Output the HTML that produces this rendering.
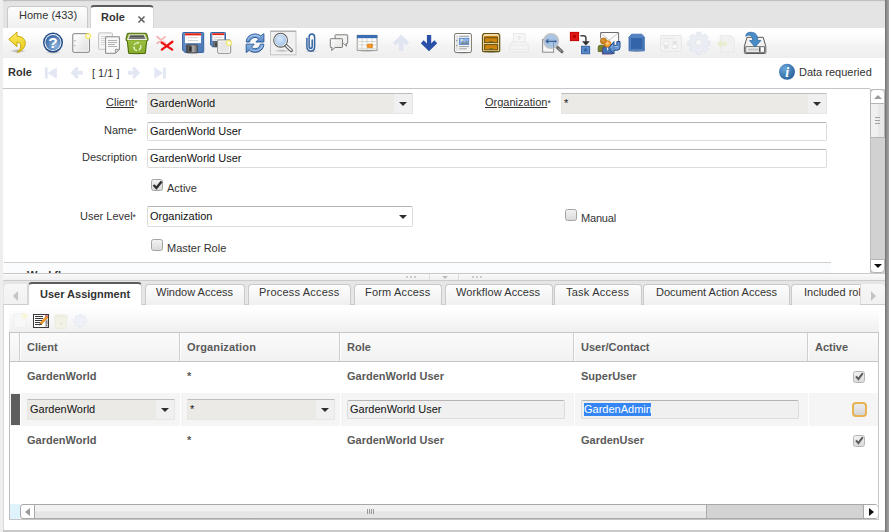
<!DOCTYPE html>
<html>
<head>
<meta charset="utf-8">
<title>Role</title>
<style>
html,body{margin:0;padding:0;}
body{width:889px;height:532px;overflow:hidden;background:#fff;position:relative;
  font-family:"Liberation Sans",sans-serif;font-size:11px;color:#333;}
.a{position:absolute;}
.t{position:absolute;white-space:nowrap;line-height:13px;}
.b{font-weight:bold;}
/* top tab bar */
#tabbar{left:0;top:0;width:889px;height:28px;background:#e4e4e4;}
#topline{left:0;top:0;width:889px;height:2px;background:linear-gradient(#c0c0c0 50%,#dfdfdf 50%);}
#leftedge{left:0;top:0;width:3px;height:532px;background:#eeeeee;}
#leftedge2{left:3px;top:281px;width:1px;height:250px;background:#dadada;}
#rightedge{left:885px;top:0;width:4px;height:532px;background:linear-gradient(90deg,#6e6e6e,#8c8c8c 40%,#a2a2a2);}
#bottomedge{left:3px;top:530px;width:882px;height:2px;background:#c9c9c9;}
.tab{position:absolute;box-sizing:border-box;border:1px solid #c9c9c9;border-bottom:none;border-radius:4px 4px 0 0;
  background:linear-gradient(#fdfdfd,#f0f0f0);}
.tabsel{background:#fff;border-top:2px solid #5c5c5c;border-color:#5c5c5c #d6d6d6 #d6d6d6;}
/* toolbar */
#toolbar{left:3px;top:28px;width:882px;height:30px;background:linear-gradient(#ffffff,#fdfdfd 25%,#f3f3f3 62%,#eeeeee);}
/* fields */
.inp{position:absolute;box-sizing:border-box;border:1px solid #dcdcdc;border-top-color:#b4b4b4;background:#fff;border-radius:2px;}
.ro{background:#eceae6;border-color:#e6e6e3;border-top-color:#bebebe;border-radius:1px;}
.btnz{position:absolute;background:#f0f0f0;}
.arr{position:absolute;width:0;height:0;border-left:4px solid transparent;border-right:4px solid transparent;border-top:4px solid #2e2e2e;}
.cb{position:absolute;box-sizing:border-box;width:12px;height:12px;border:1px solid #a3a3a3;border-radius:2.5px;background:linear-gradient(#f2f2f2,#dadada);}
.hl{position:absolute;height:1px;background:#cfcfcf;}
.vl{position:absolute;width:1px;background:#cfcfcf;}
.gt{position:absolute;white-space:nowrap;line-height:13px;font-weight:bold;color:#5a5a5a;}
</style>
</head>
<body>
<!-- frame -->
<div class="a" id="tabbar"></div>
<div class="a" id="topline"></div>
<div class="a" id="toolbar"></div>
<div class="a" id="leftedge"></div>
<div class="a" id="leftedge2"></div>
<div class="a" id="rightedge"></div>
<div class="a" id="bottomedge"></div>

<!-- top tabs -->
<div class="tab" style="left:7px;top:6px;width:81px;height:22px;"></div>
<div class="t" style="left:19px;top:9px;">Home (433)</div>
<div class="tab tabsel" style="left:90px;top:5px;width:64px;height:23px;"></div>
<div class="t b" style="left:101px;top:11px;">Role</div>
<svg class="a" style="left:137px;top:15px;" width="9" height="9" viewBox="0 0 9 9"><path d="M1.5 1.5 L7.5 7.5 M7.5 1.5 L1.5 7.5" stroke="#5e5e5e" stroke-width="1.5" fill="none"/></svg>

<!-- TOOLBAR ICONS -->


<!-- breadcrumb -->
<div class="t b" style="left:8px;top:66px;">Role</div>
<div class="t" style="left:92px;top:67px;">[ 1/1 ]</div>
<div class="t" style="left:799px;top:66px;">Data requeried</div>
<div class="hl" style="left:3px;top:88px;width:867px;background:#c6c6c6;"></div>

<!-- FORM -->
<div id="form">
<!-- labels -->
<div class="t" style="left:106px;top:96px;"><span style="text-decoration:underline;">Client</span><span style="font-size:8.5px;vertical-align:0px;">*</span></div>
<div class="t" style="left:485px;top:96px;"><span style="text-decoration:underline;">Organization</span><span style="font-size:8.5px;vertical-align:0px;">*</span></div>
<div class="t" style="left:104px;top:124px;">Name<span style="font-size:8.5px;vertical-align:0px;">*</span></div>
<div class="t" style="left:82px;top:151px;">Description</div>
<div class="t" style="left:80px;top:210px;">User Level<span style="font-size:8.5px;vertical-align:0px;">*</span></div>

<!-- client combo -->
<div class="inp ro" style="left:147px;top:93px;width:266px;height:21px;"></div>
<div class="t" style="left:150px;top:97px;color:#111;">GardenWorld</div>
<div class="btnz" style="left:394px;top:94px;width:18px;height:19px;"></div><div class="arr" style="left:399px;top:102px;"></div>
<!-- org combo -->
<div class="inp ro" style="left:561px;top:93px;width:266px;height:21px;"></div>
<div class="t" style="left:564px;top:97px;color:#111;">*</div>
<div class="btnz" style="left:808px;top:94px;width:18px;height:19px;"></div><div class="arr" style="left:813px;top:102px;"></div>
<!-- name -->
<div class="inp" style="left:147px;top:122px;width:680px;height:19px;"></div>
<div class="t" style="left:150px;top:125px;color:#111;">GardenWorld User</div>
<!-- description -->
<div class="inp" style="left:147px;top:149px;width:680px;height:19px;"></div>
<div class="t" style="left:150px;top:152px;color:#111;">GardenWorld User</div>
<!-- active -->
<div class="cb" style="left:151px;top:179px;"></div>
<svg class="a" style="left:151px;top:178px;" width="14" height="14" viewBox="0 0 14 14"><path d="M2.6 7 L5.4 10 L10.6 3.4" stroke="#2e2e2e" stroke-width="2.4" fill="none"/></svg>
<div class="t" style="left:167px;top:182px;">Active</div>
<!-- user level -->
<div class="inp" style="left:147px;top:206px;width:266px;height:21px;"></div>
<div class="t" style="left:150px;top:210px;color:#111;">Organization</div>
<div class="arr" style="left:399px;top:215px;"></div>
<!-- manual -->
<div class="cb" style="left:565px;top:209px;"></div>
<div class="t" style="left:581px;top:212px;letter-spacing:-0.18px;">Manual</div>
<!-- master role -->
<div class="cb" style="left:151px;top:239px;"></div>
<div class="t" style="left:167px;top:242px;">Master Role</div>
<!-- group line + clipped Workflow -->
<div class="hl" style="left:4px;top:262px;width:827px;"></div>
<div class="a" style="left:4px;top:263px;width:827px;height:10px;overflow:hidden;background:#fbfcfe;"><div class="t b" style="left:23px;top:6px;">Workflow</div></div>
<!-- vertical scrollbar -->
<div class="a" style="left:870px;top:89px;width:15px;height:184px;background:#d1d1d1;border-left:1px solid #bdbdbd;box-sizing:border-box;"></div>
<div class="a" style="left:870px;top:103px;width:15px;height:35px;box-sizing:border-box;border:1px solid #b4b4b4;background:linear-gradient(90deg,#f1f1f1,#f0f0f0 50%,#e7e7e7 50%,#e8e8e8);"></div>
<div class="a" style="left:875px;top:117px;width:5px;height:1px;background:#a2a2a2;box-shadow:0 3px 0 #a2a2a2,0 6px 0 #a2a2a2;"></div>
<div class="a" style="left:870px;top:89px;width:15px;height:15px;box-sizing:border-box;border:1px solid #b4b4b4;border-radius:4px 4px 0 0;background:#fff;"></div>
<div class="a" style="left:873.5px;top:95px;width:0;height:0;border-left:4px solid transparent;border-right:4px solid transparent;border-bottom:4px solid #9a9a9a;"></div>
<div class="a" style="left:870px;top:259px;width:15px;height:14px;box-sizing:border-box;border:1px solid #b4b4b4;border-radius:0 0 4px 4px;background:#fff;"></div>
<div class="a" style="left:873.5px;top:264px;width:0;height:0;border-left:4px solid transparent;border-right:4px solid transparent;border-top:4px solid #111;"></div>
<!-- splitter -->
<div class="hl" style="left:3px;top:273px;width:882px;background:#c9c9c9;"></div>
<div class="a" style="left:3px;top:274px;width:882px;height:6px;background:linear-gradient(#fafafa,#f0f0f0);"></div>
<div class="hl" style="left:3px;top:280px;width:882px;background:#cccccc;"></div>
<div class="a" style="left:406px;top:276px;width:2px;height:2px;background:#cbcbcb;box-shadow:4px 0 0 #cbcbcb,8px 0 0 #cbcbcb;"></div>
<div class="a" style="left:472px;top:276px;width:2px;height:2px;background:#cbcbcb;box-shadow:4px 0 0 #cbcbcb,8px 0 0 #cbcbcb;"></div>
<div class="vl" style="left:429px;top:274px;height:6px;background:#ddd;"></div>
<div class="vl" style="left:458px;top:274px;height:6px;background:#dcdcdc;"></div>
<div class="a" style="left:441.5px;top:276px;width:0;height:0;border-left:3px solid transparent;border-right:3px solid transparent;border-top:3px solid #bbb;"></div>
</div>

<!-- DETAIL -->
<div id="detail">
<!-- detail tab strip -->
<div class="a" style="left:3px;top:281px;width:882px;height:24px;background:#e6e6e6;"></div>
<div class="hl" style="left:3px;top:304px;width:882px;background:#cdcdcd;"></div>
<div class="a" style="left:4px;top:284px;width:24px;height:20px;box-sizing:border-box;border-right:1px solid #dadada;background:linear-gradient(#f7f7f7,#f1f1f1);border-radius:4px 0 0 0;"></div>
<div class="a" style="left:860px;top:284px;width:25px;height:20px;box-sizing:border-box;border-left:1px solid #dadada;background:linear-gradient(#f7f7f7,#f1f1f1);border-radius:0 4px 0 0;"></div>
<div class="a" style="left:13px;top:291px;width:0;height:0;border-top:5px solid transparent;border-bottom:5px solid transparent;border-right:5px solid #c4c4c4;"></div>
<div class="a" style="left:871px;top:291px;width:0;height:0;border-top:5px solid transparent;border-bottom:5px solid transparent;border-left:5px solid #c4c4c4;"></div>
<div class="a" style="left:8px;top:282px;width:852px;height:23px;overflow:hidden;">
  <div class="tab" style="left:137px;top:2px;width:100px;height:21px;"></div>
  <div class="t" style="left:148px;top:4px;">Window Access</div>
  <div class="tab" style="left:240px;top:2px;width:103px;height:21px;"></div>
  <div class="t" style="left:251px;top:4px;letter-spacing:0.2px;">Process Access</div>
  <div class="tab" style="left:346px;top:2px;width:88px;height:21px;"></div>
  <div class="t" style="left:357px;top:4px;letter-spacing:0.17px;">Form Access</div>
  <div class="tab" style="left:437px;top:2px;width:108px;height:21px;"></div>
  <div class="t" style="left:448px;top:4px;letter-spacing:0.085px;">Workflow Access</div>
  <div class="tab" style="left:546px;top:2px;width:88px;height:21px;"></div>
  <div class="t" style="left:558px;top:4px;letter-spacing:0.24px;">Task Access</div>
  <div class="tab" style="left:635px;top:2px;width:147px;height:21px;"></div>
  <div class="t" style="left:648px;top:4px;">Document Action Access</div>
  <div class="tab" style="left:783px;top:2px;width:100px;height:21px;"></div>
  <div class="t" style="left:796px;top:4px;">Included role</div>
  <div class="tab tabsel" style="left:20px;top:0;width:114px;height:23px;"></div>
  <div class="t b" style="left:32px;top:6px;">User Assignment</div>
</div>
<div class="a" style="left:9px;top:308px;width:870px;height:24px;background:linear-gradient(#ffffff,#f0f0f0);"></div>
<!-- mini toolbar placeholder -->
<div id="mini"></div>

<!-- grid -->
<div class="a" style="left:10px;top:333px;width:868px;height:28px;background:linear-gradient(#fbfbfb,#f1f1f1);"></div>
<div class="hl" style="left:9px;top:332px;width:870px;background:#c6c6c6;"></div>
<div class="hl" style="left:9px;top:361px;width:870px;background:#c6c6c6;"></div>
<div class="vl" style="left:9px;top:332px;height:187px;background:#bdbdbd;"></div>
<div class="vl" style="left:878px;top:332px;height:187px;background:#c8c8c8;"></div>
<div class="hl" style="left:9px;top:519px;width:870px;background:#c6c6c6;"></div>
<div class="vl" style="left:19px;top:333px;height:28px;box-shadow:1px 0 0 #fdfdfd;"></div>
<div class="vl" style="left:179px;top:333px;height:28px;box-shadow:1px 0 0 #fdfdfd;"></div>
<div class="vl" style="left:339px;top:333px;height:28px;box-shadow:1px 0 0 #fdfdfd;"></div>
<div class="vl" style="left:573px;top:333px;height:28px;box-shadow:1px 0 0 #fdfdfd;"></div>
<div class="vl" style="left:807px;top:333px;height:28px;box-shadow:1px 0 0 #fdfdfd;"></div>
<div class="gt" style="left:27px;top:341px;">Client</div>
<div class="gt" style="left:187px;top:341px;letter-spacing:0.15px;">Organization</div>
<div class="gt" style="left:347px;top:341px;">Role</div>
<div class="gt" style="left:581px;top:341px;">User/Contact</div>
<div class="gt" style="left:815px;top:341px;">Active</div>
<!-- row1 -->
<div class="gt" style="left:27px;top:370px;">GardenWorld</div>
<div class="gt" style="left:187px;top:370px;">*</div>
<div class="gt" style="left:347px;top:370px;">GardenWorld User</div>
<div class="gt" style="left:581px;top:370px;">SuperUser</div>
<!-- row2 edit -->
<div class="a" style="left:10px;top:393px;width:868px;height:33px;background:#f5f5f5;"></div>
<div class="vl" style="left:20px;top:393px;height:33px;background:#fff;"></div>
<div class="vl" style="left:180px;top:393px;height:33px;background:#fff;"></div>
<div class="vl" style="left:340px;top:393px;height:33px;background:#fff;"></div>
<div class="vl" style="left:574px;top:393px;height:33px;background:#fff;"></div>
<div class="vl" style="left:808px;top:393px;height:33px;background:#fff;"></div>
<div class="a" style="left:11px;top:394px;width:9px;height:31px;background:#5e5e5e;"></div>
<div class="inp ro" style="left:27px;top:399px;width:148px;height:21px;"></div><div class="a" style="left:156px;top:400px;width:18px;height:19px;background:#f0f0f0;"></div>
<div class="t" style="left:30px;top:403px;color:#111;">GardenWorld</div>
<div class="arr" style="left:161px;top:408px;"></div>
<div class="inp ro" style="left:187px;top:399px;width:148px;height:21px;"></div><div class="a" style="left:316px;top:400px;width:18px;height:19px;background:#f0f0f0;"></div>
<div class="t" style="left:190px;top:403px;color:#111;">*</div>
<div class="arr" style="left:321px;top:408px;"></div>
<div class="inp" style="left:347px;top:400px;width:218px;height:19px;background:#f0f0f0;"></div>
<div class="t" style="left:350px;top:403px;color:#111;">GardenWorld User</div>
<div class="inp" style="left:581px;top:400px;width:218px;height:19px;background:#f0f0f0;"></div>
<div class="a" style="left:584px;top:403px;width:67px;height:13px;background:#3586f5;overflow:hidden;"></div>
<div class="t" style="left:584px;top:403px;color:#fff;">GardenAdmin</div>
<div class="a" style="left:852px;top:402px;width:15px;height:15px;box-sizing:border-box;border:2px solid #e8b352;border-radius:4px;background:#9a9a9a;"></div><div class="a" style="left:854px;top:404px;width:11px;height:11px;border-radius:2px;background:linear-gradient(#ececec,#d6d6d6);"></div>
<!-- row3 -->
<div class="gt" style="left:27px;top:434px;">GardenWorld</div>
<div class="gt" style="left:187px;top:434px;">*</div>
<div class="gt" style="left:347px;top:434px;">GardenWorld User</div>
<div class="gt" style="left:581px;top:434px;">GardenUser</div>
<!-- checked boxes -->
<div class="cb" style="left:853px;top:371px;border-color:#b5b5b5;"></div>
<svg class="a" style="left:853px;top:370px;" width="13" height="13" viewBox="0 0 13 13"><path d="M3 6.4 L5.4 9.2 L9.8 3.2" stroke="#5c5c5c" stroke-width="2" fill="none"/></svg>
<div class="cb" style="left:853px;top:435px;border-color:#b5b5b5;"></div>
<svg class="a" style="left:853px;top:434px;" width="13" height="13" viewBox="0 0 13 13"><path d="M3 6.4 L5.4 9.2 L9.8 3.2" stroke="#5c5c5c" stroke-width="2" fill="none"/></svg>
<!-- h scrollbar -->
<div class="a" style="left:10px;top:504px;width:10px;height:15px;background:#dff3fd;"></div>
<div class="a" style="left:20px;top:504px;width:858px;height:15px;box-sizing:border-box;border:1px solid #a9a9a9;border-radius:3px;background:#d3d3d3;"></div>
<div class="a" style="left:34px;top:505px;width:671px;height:13px;background:linear-gradient(#f2f2f2,#f0f0f0 48%,#e4e4e4 52%,#e6e6e6);border-left:1px solid #a9a9a9;border-right:1px solid #a9a9a9;"></div>
<div class="a" style="left:21px;top:505px;width:13px;height:13px;background:#fff;border-radius:3px 0 0 3px;"></div>
<div class="a" style="left:25px;top:508px;width:0;height:0;border-top:4px solid transparent;border-bottom:4px solid transparent;border-right:5px solid #999;"></div>
<div class="a" style="left:863px;top:505px;width:14px;height:13px;background:#fff;border-left:1px solid #a9a9a9;border-radius:0 3px 3px 0;"></div>
<div class="a" style="left:869px;top:508px;width:0;height:0;border-top:4px solid transparent;border-bottom:4px solid transparent;border-left:5px solid #111;"></div>
<div class="a" style="left:367px;top:509px;width:1px;height:5px;background:#999;box-shadow:2px 0 0 #999,4px 0 0 #999,6px 0 0 #999;"></div>
</div>

<div id="icons">
<svg class="a" style="left:0;top:0;" width="889" height="532" viewBox="0 0 889 532">
<defs>
  <linearGradient id="gy" x1="0" y1="0" x2="0" y2="1"><stop offset="0" stop-color="#fbea60"/><stop offset="1" stop-color="#e8c914"/></linearGradient>
  <radialGradient id="gh" cx="0.65" cy="0.7" r="0.8"><stop offset="0" stop-color="#8fb5de"/><stop offset="1" stop-color="#2f5f9f"/></radialGradient>
  <linearGradient id="gd" x1="0" y1="0" x2="1" y2="1"><stop offset="0" stop-color="#ffffff"/><stop offset="1" stop-color="#dcdcdc"/></linearGradient>
  <linearGradient id="gg" x1="0" y1="0" x2="0" y2="1"><stop offset="0" stop-color="#9bc040"/><stop offset="1" stop-color="#86aa2c"/></linearGradient>
  <linearGradient id="gf" x1="0" y1="0" x2="1" y2="1"><stop offset="0" stop-color="#6e94c9"/><stop offset="1" stop-color="#4a76b4"/></linearGradient>
  <linearGradient id="gm" x1="0" y1="0" x2="1" y2="0"><stop offset="0" stop-color="#444"/><stop offset="0.6" stop-color="#aaa"/><stop offset="1" stop-color="#666"/></linearGradient>
  <linearGradient id="gb" x1="0" y1="0" x2="0" y2="1"><stop offset="0" stop-color="#8fb5e2"/><stop offset="1" stop-color="#5686c4"/></linearGradient>
  <linearGradient id="gb2" x1="0" y1="0" x2="1" y2="1"><stop offset="0" stop-color="#3a70b8"/><stop offset="1" stop-color="#86afe0"/></linearGradient>
  <radialGradient id="gl" cx="0.4" cy="0.35" r="0.7"><stop offset="0" stop-color="#d6e6f8"/><stop offset="1" stop-color="#a9c8ec"/></radialGradient>
  <radialGradient id="gi" cx="0.35" cy="0.3" r="0.8"><stop offset="0" stop-color="#6aa6d8"/><stop offset="1" stop-color="#225d97"/></radialGradient>
  <radialGradient id="gs" cx="0.5" cy="0.5" r="0.5"><stop offset="0" stop-color="#000" stop-opacity="0.35"/><stop offset="1" stop-color="#000" stop-opacity="0"/></radialGradient>
  <radialGradient id="gstar" cx="0.5" cy="0.5" r="0.5"><stop offset="0" stop-color="#fff"/><stop offset="0.3" stop-color="#fffce6"/><stop offset="0.62" stop-color="#f5e966"/><stop offset="1" stop-color="#f5e966" stop-opacity="0.1"/></radialGradient>
</defs>

<!-- 1 undo -->
<ellipse cx="18" cy="51" rx="8" ry="2" fill="url(#gs)"/>
<path d="M8.8 39.3 L17 32 L17 36.3 C22 36.3 25.6 39 25.3 43.5 C25 48 21 51.5 17.2 52.5 C20 50 21.3 47 20.6 44.5 C20 42.6 18.8 42.2 17 42.2 L17 46.7 Z" fill="url(#gy)" stroke="#c4a000" stroke-width="0.9" stroke-linejoin="round"/>

<!-- 2 help -->
<ellipse cx="53" cy="52.3" rx="8" ry="1.6" fill="url(#gs)"/>
<circle cx="53" cy="42.6" r="10" fill="#204a87"/>
<circle cx="53" cy="42.6" r="8.5" fill="#fff"/>
<circle cx="53" cy="42.6" r="7.6" fill="url(#gh)"/>
<text x="53.1" y="48.2" text-anchor="middle" font-family="Liberation Sans" font-weight="bold" font-size="15.5" fill="#fff">?</text>

<!-- 3 new -->
<rect x="72.8" y="33.7" width="16.6" height="18.6" rx="1.3" fill="#fff" stroke="#7c7e79" stroke-width="1"/>
<rect x="74.3" y="35.2" width="13.6" height="15.6" fill="url(#gd)" opacity="0.9"/>
<circle cx="74.9" cy="40.7" r="0.7" fill="#999"/><circle cx="74.9" cy="45.6" r="0.7" fill="#999"/>
<circle cx="88.2" cy="36.2" r="3.6" fill="url(#gstar)"/>

<!-- 4 copy -->
<rect x="98.6" y="32.9" width="13.8" height="16.4" rx="0.8" fill="#f6f6f6" stroke="#c2c2c2" stroke-width="1"/>
<path d="M101 36.5 h9 M101 38.5 h9 M101 40.5 h4 M101 42.5 h4 M101 44.5 h4" stroke="#d4d4d4" stroke-width="0.9"/>
<path d="M105.6 36.8 h13.8 v12.5 l-4 4 h-9.8 Z" fill="#f8f8f8" stroke="#888a85" stroke-width="1" stroke-linejoin="round"/>
<path d="M119.4 49.3 h-4 v4 Z" fill="#d8d8d8" stroke="#888a85" stroke-width="0.8" stroke-linejoin="round"/>
<path d="M108 40.5 h9 M108 42.5 h9 M108 44.5 h7 M108 46.5 h9" stroke="#a8a8a8" stroke-width="0.9"/>

<!-- 5 trash -->
<ellipse cx="137" cy="53.4" rx="10" ry="1.5" fill="url(#gs)"/>
<path d="M127.2 40 L128.6 52.6 Q128.7 53.5 129.6 53.5 H144.4 Q145.3 53.5 145.4 52.6 L146.8 40 Z" fill="url(#gg)" stroke="#4f6d0d" stroke-width="1.1" stroke-linejoin="round"/>
<path d="M128.8 33.3 H145.2 Q146.4 33.3 146.8 34.4 L148 38.8 Q148.3 40.6 146.8 40.8 L127.2 40.8 Q125.7 40.6 126 38.8 L127.2 34.4 Q127.6 33.3 128.8 33.3 Z" fill="#93b73b"/>
<path d="M127.3 41 Q125.7 40.6 126 38.8 L127.2 34.4 Q127.6 33.3 128.8 33.3 H145.2 Q146.4 33.3 146.8 34.4 L148 38.8 Q148.3 40.6 146.7 41" fill="none" stroke="#4f6d0d" stroke-width="1.1" stroke-linejoin="round"/>
<path d="M129.2 34.4 H144.8 L147 39.9 H127 Z" fill="#eef2e2"/>
<path d="M130.2 35.4 H143.8 L145.6 39 H128.4 Z" fill="#787878"/>
<path d="M130.2 35.4 H143.8 L144.5 36.9 H129.5 Z" fill="#525252"/>
<g fill="none" stroke="#eaf4cc" stroke-width="1.2">
<path d="M134 45 a3.9 3.9 0 0 1 4 -2.2"/><path d="M140.6 45 a3.9 3.9 0 0 1 -1 4.4"/><path d="M137 50.6 a3.9 3.9 0 0 1 -3.300000000000001 -3.4"/>
</g>
<path d="M137.6 41.6 l2 1.5 l-2.2 1 Z M140.8 49.8 l-2.2 1 l0.3 -2.3 Z M132.6 47.6 l1.9 -1.3 l0.3 2.3 Z" fill="#eaf4cc"/>

<!-- 6 delete -->
<path d="M157 36.7 l8.2 6.6 M165.2 36.9 l-8 6.4" stroke="#f6aeb0" stroke-width="1.8" stroke-linecap="round" opacity="0.9"/>
<path d="M161.6 42.6 l10.6 7 M172.4 41.8 l-10.6 7.8" stroke="#ee1111" stroke-width="2.3" stroke-linecap="round"/>

<!-- 7 save -->
<ellipse cx="193" cy="52.8" rx="8" ry="1.3" fill="url(#gs)"/>
<path d="M183.4 32.5 h19.4 q0.9 0 0.9 0.9 v18.2 q0 0.9 -0.9 0.9 h-17.6 l-2.6 -2.3 v-16.8 q0 -0.9 0.8 -0.9 Z" fill="url(#gf)" stroke="#3465a4" stroke-width="1"/>
<rect x="185" y="33.3" width="16" height="9.8" fill="#fff"/>
<rect x="185" y="33.3" width="16" height="2.1" fill="#e32210"/>
<path d="M188 37.6 h10 M188 40.5 h10" stroke="#c8c8c8" stroke-width="0.8"/>
<rect x="186.6" y="44.8" width="10.8" height="8" rx="0.8" fill="url(#gm)" stroke="#444" stroke-width="0.8"/>
<rect x="189.2" y="46.3" width="2.4" height="5.3" fill="#2a2a2a"/>

<!-- 8 save and new -->
<path d="M211.4 32.5 h13.3 q0.8 0 0.8 0.8 v13.4 h-13 l-1.9 -1.7 v-11.7 q0 -0.8 0.8 -0.8 Z" fill="url(#gf)" stroke="#3465a4" stroke-width="1"/>
<rect x="212.3" y="33.3" width="12" height="7.5" fill="#fff"/>
<rect x="212.3" y="33.3" width="12" height="1.8" fill="#e32210"/>
<path d="M213.5 37.3 h9.5 M213.5 39.4 h5" stroke="#c8c8c8" stroke-width="0.8"/>
<rect x="213.8" y="41.8" width="5" height="5" fill="#888" stroke="#444" stroke-width="0.7"/>
<rect x="215.2" y="42.6" width="1.6" height="3.6" fill="#333"/>
<rect x="217.7" y="39.9" width="13" height="13.4" rx="1.2" fill="#fff" stroke="#888a85" stroke-width="1"/>
<rect x="219.2" y="41.4" width="10" height="10.4" fill="#e6e6e6"/>
<circle cx="228.9" cy="43" r="3.7" fill="url(#gstar)"/>

<!-- 9 refresh -->
<ellipse cx="255" cy="52" rx="7" ry="1.2" fill="url(#gs)"/>
<path d="M246.3 42 C246.3 37 250.5 34 255 34 C257.3 34 259.2 34.7 260.7 35.9 L263.9 33.7 L263.9 42 L255.9 42 L258.6 39.2 C257.7 38.2 256.4 37.4 255 37.4 C252.2 37.4 249.9 39.6 249.7 42 Z" fill="url(#gb)" stroke="#2f5f9f" stroke-width="1" stroke-linejoin="round"/>
<path d="M263.8 44.2 C263.8 49.2 259.6 52.2 255.1 52.2 C252.8 52.2 250.9 51.5 249.4 50.3 L246.2 52.5 L246.2 44.2 L254.2 44.2 L251.5 47 C252.4 48 253.7 48.8 255.1 48.8 C257.9 48.8 260.2 46.6 260.4 44.2 Z" fill="url(#gb)" stroke="#2f5f9f" stroke-width="1" stroke-linejoin="round"/>
<path d="M247.6 40.6 C248.2 37.6 251.4 35.4 255 35.4 C256.8 35.4 258.4 35.9 259.8 36.9" fill="none" stroke="#c4daf2" stroke-width="0.8" opacity="0.9"/>
<path d="M262.4 45.6 C261.8 48.6 258.6 50.8 255 50.8 C253.2 50.8 251.6 50.3 250.2 49.3" fill="none" stroke="#c4daf2" stroke-width="0.8" opacity="0.9"/>

<!-- 10 find (pressed) -->
<rect x="270.5" y="31.2" width="25.5" height="23.6" fill="#f1f1f1" stroke="#c4c4c4" stroke-width="1"/>
<path d="M270.5 31.2 h25.5" stroke="#a4a4a4" stroke-width="1"/>
<ellipse cx="282" cy="50.8" rx="8.5" ry="1.8" fill="url(#gs)" opacity="0.7"/>
<path d="M285.6 45.2 L291.3 50.4" stroke="#555" stroke-width="3.4" stroke-linecap="round"/>
<path d="M285.9 45.5 L291.1 50.2" stroke="#f4f4f4" stroke-width="1.6" stroke-linecap="round"/>
<circle cx="280.6" cy="40.2" r="6.9" fill="#fff" stroke="#5c5c5c" stroke-width="1.1"/>
<circle cx="280.6" cy="40.2" r="5.3" fill="url(#gl)" stroke="#8fb3de" stroke-width="0.6"/>

<!-- 11 attachment -->
<ellipse cx="311" cy="51.6" rx="6.5" ry="1" fill="url(#gs)"/>
<path d="M306.9 38.2 L306.9 46.6 C306.9 49.4 308.5 51 310.8 51 C313.1 51 314.6 49.4 314.6 46.8 L314.6 37.3 C314.6 35.1 313.5 33.9 311.8 33.9 C310.1 33.9 309.1 35.1 309.1 37.2 L309.1 46.2 C309.1 47.5 309.7 48.3 310.7 48.3 C311.7 48.3 312.2 47.5 312.2 46.2 L312.2 40" fill="none" stroke="#3465a4" stroke-width="1.5" stroke-linecap="round"/>

<!-- 12 chat -->
<path d="M335.7 34.8 h11.4 q0.6 0 0.6 0.6 v7.6 q0 0.6 -0.6 0.6 h-1 l0.6 2.6 l-3.2 -2.6 h-7.8 q-0.6 0 -0.6 -0.6 v-7.6 q0 -0.6 0.6 -0.6 Z" fill="#f2f2f2" stroke="#7d7d78" stroke-width="1" stroke-linejoin="round"/>
<path d="M330.9 38.7 h11 q0.6 0 0.6 0.6 v7.6 q0 0.6 -0.6 0.6 h-6.8 l-3.5 3 l0.5 -3 h-1.2 q-0.6 0 -0.6 -0.6 v-7.6 q0 -0.6 0.6 -0.6 Z" fill="url(#gd)" stroke="#7d7d78" stroke-width="1" stroke-linejoin="round"/>

<!-- 13 grid toggle -->
<ellipse cx="367" cy="50.8" rx="11" ry="1.3" fill="url(#gs)"/>
<rect x="357.2" y="35.3" width="19.8" height="15" fill="#fff" stroke="#8a8a86" stroke-width="0.9"/>
<rect x="356.9" y="35" width="20.4" height="3.2" fill="#3b6db3"/>
<path d="M357 41.6 h20 M357 44.9 h20 M357 48.2 h20 M362 38.2 v12 M367 38.2 v12 M372 38.2 v12" stroke="#cfcfca" stroke-width="0.9"/>
<rect x="367.2" y="44" width="5.4" height="3.7" rx="1.2" fill="#f28a12" stroke="#e07000" stroke-width="0.5"/>
<path d="M368.7 45.8 h2.4" stroke="#fbc27a" stroke-width="0.8"/>

<!-- 14 up (disabled) -->
<path d="M401.2 34.6 L409.3 42.8 L406.5 45.6 L403.5 42.6 L403.5 51 L398.8 51 L398.8 42.6 L395.8 45.6 L393 42.8 Z" fill="#e0e5f1"/>

<!-- 15 down -->
<path d="M426.9 35 L431.2 35 L431.2 43.4 L434.3 40.3 L437.2 43.2 L429 51.3 L420.8 43.2 L423.7 40.3 L426.9 43.4 Z" fill="#2a4fa6"/>

<!-- 16 report -->
<ellipse cx="463" cy="52.8" rx="8" ry="1.2" fill="url(#gs)"/>
<rect x="454.6" y="33.5" width="16.8" height="19" rx="1.4" fill="#fff" stroke="#77776f" stroke-width="1"/>
<rect x="456" y="35" width="2.2" height="16" fill="#e2e2e2"/>
<rect x="458.2" y="35" width="11.8" height="16" fill="#f1f1f1"/>
<circle cx="456.8" cy="40.6" r="0.6" fill="#777"/><circle cx="456.8" cy="45.6" r="0.6" fill="#777"/>
<path d="M459.2 36.3 h9.8 M459.2 46.6 h9.8 M459.2 48.8 h7.6" stroke="#9a9a9a" stroke-width="0.9"/>
<rect x="459.3" y="38.3" width="9.4" height="6.2" fill="#8fb6e6" stroke="#4f86d0" stroke-width="0.8"/>
<path d="M459.8 44 L463 41.4 L465 42.8 L466.8 40.6 L468.3 44 Z" fill="#7e8894"/>
<circle cx="461.6" cy="40" r="0.9" fill="#fdf5b0"/>

<!-- 17 archive -->
<ellipse cx="491" cy="52.3" rx="8" ry="1.2" fill="url(#gs)"/>
<path d="M484 33.5 h14.2 l1.5 1.6 v15.4 q0 1.2 -1.2 1.2 h-14.8 q-1.2 0 -1.2 -1.2 v-15.4 Z" fill="#f3d9a6" stroke="#62520f" stroke-width="1.2" stroke-linejoin="round"/>
<rect x="484.3" y="36" width="13.6" height="1.4" fill="#c57a0a"/>
<rect x="484.6" y="37.7" width="13" height="4.9" fill="#d08410" stroke="#62520f" stroke-width="1"/>
<rect x="484.6" y="44.6" width="13" height="5.2" fill="#d08410" stroke="#62520f" stroke-width="1"/>
<rect x="489.2" y="41.2" width="3.8" height="1.2" fill="#5d6a1e"/>
<rect x="489.2" y="48.4" width="3.8" height="1.2" fill="#5d6a1e"/>

<!-- 18 print (disabled) -->
<rect x="513.6" y="33.6" width="11.4" height="9" fill="#f7f7f7" stroke="#e6e6e6" stroke-width="0.9"/>
<path d="M519.3 35.6 l-2.4 2.3 h1.7 v2 h1.4 v-2 h1.7 Z" fill="#e9e9e9"/>
<path d="M512.4 42 h13.6 l2.3 3 v6 q0 1 -1 1 h-16.400000000000002 q-1 0 -1 -1 v-6 Z" fill="#f4f4f4" stroke="#e5e5e5" stroke-width="0.9"/>
<path d="M511 45.4 h16.400000000000002 M511.6 49.4 h15" stroke="#e9e9e9" stroke-width="0.8"/>

<!-- 19 zoom across -->
<rect x="542.6" y="39.4" width="11" height="12.8" fill="#f7f7f7" stroke="#8a8a86" stroke-width="1"/>
<path d="M557 47 L561.9 51.6" stroke="#6a6a6a" stroke-width="3.2" stroke-linecap="round"/>
<path d="M558.6 48.4 L561.3 51" stroke="#a8a8a8" stroke-width="1" stroke-linecap="round"/>
<circle cx="551.1" cy="41" r="7.3" fill="#a3c1e3" fill-opacity="0.93" stroke="#c4c4c4" stroke-width="1.5"/>
<path d="M553.6 41.6 v6.6" stroke="#70839a" stroke-width="0.8" opacity="0.8"/>
<path d="M545.2 41.3 L548.4 38.7 L548.4 40.7 L555.2 40.7 L555.2 39.7 L557 41.3 L555.2 42.9 L555.2 41.9 L548.4 41.9 L548.4 43.9 Z" fill="#2d5288" opacity="0.85"/>
<!-- 20 active workflows -->
<rect x="570.4" y="32.4" width="8.2" height="8.2" fill="#e01515" stroke="#c40000" stroke-width="1"/>
<rect x="573" y="35" width="3" height="3" fill="#b80000"/>
<rect x="581.6" y="46.3" width="8" height="7.4" fill="#5b8bc9" stroke="#3465a4" stroke-width="1"/>
<rect x="584" y="48.5" width="3.2" height="3" fill="#3465a4"/>
<path d="M580.4 35.8 h3.2 q2.3 0 2.3 2.3 v3.6" fill="none" stroke="#444" stroke-width="1.5"/>
<path d="M582 41.2 h7.8 l-3.9 4.4 Z" fill="#2e2e2e"/>

<!-- 21 requests -->
<path d="M600.7 38.5 V32.6 H618.6 V41.2" fill="#fbfbfb" stroke="#5e5e5e" stroke-width="1"/>
<rect x="601.2" y="33.1" width="16.9" height="12" fill="#fbfbfb"/>
<path d="M601 33 L609.2 40.2 L618.3 33" fill="none" stroke="#b8b8b8" stroke-width="0.8"/>
<path d="M598.2 47.4 q0 -2.2 2.2 -2.2 h3.4 q1.6 0 1.6 1.6 v4.8 h-7.2 Z" fill="#75822a" stroke="#56601a" stroke-width="0.8"/>
<circle cx="603.5" cy="41" r="3.1" fill="#cc8322" stroke="#a8650f" stroke-width="0.7"/>
<circle cx="603" cy="40.2" r="1.2" fill="#e0a24a" opacity="0.8"/>
<path d="M602.4 54 v-4.4 q0 -2.8 2.8 -2.8 h5 q2.2 0 2.2 2.6 v4.600000000000001 Z" fill="#3f6fb5" stroke="#5c3566" stroke-width="0.9"/>
<path d="M606.6 47.4 l1.2 3.6 l1.2 -3.6 Z" fill="#fff"/>
<circle cx="607.8" cy="43.9" r="3.2" fill="#f3a233" stroke="#cf6f10" stroke-width="0.8"/>
<circle cx="607.4" cy="43.3" r="1.3" fill="#fbd18c"/>
<path d="M608.5 48.1 L614 41.6 L614 45.3 L616.9 45.3 L616.9 41.5 L620 41.5 L620 47.4 Q620 50.2 617.2 50.2 L614 50.2 L614 54 Z" fill="url(#gb2)" stroke="#1f4a8c" stroke-width="1" stroke-linejoin="round"/>
<path d="M610.6 48 L613 45.2 M614.6 46.4 H617.6" fill="none" stroke="#c2d8f2" stroke-width="0.8" opacity="0.9"/>
<!-- 22 product info -->
<ellipse cx="636.5" cy="51.4" rx="8" ry="1.1" fill="url(#gs)"/>
<path d="M631.6 34.2 h10.2 l2.6 3 v13.6 h-15.4 v-13.6 Z" fill="#3363a8" stroke="#4f7fc0" stroke-width="0.9" stroke-linejoin="round"/>
<path d="M630.4 37.6 h12.600000000000001 v11.8 h-12.600000000000001 Z" fill="none" stroke="#6f97cf" stroke-width="0.8" opacity="0.8"/>
<path d="M631.8 34.7 h9.8 l2 2.4 h-13.8 Z" fill="#5f8bc8" opacity="0.8"/>

<!-- 23 disabled window -->
<rect x="660.6" y="35.5" width="20.8" height="15.8" rx="0.8" fill="#f3f3f3" stroke="#e6e6e6" stroke-width="1"/>
<path d="M662.6 38.6 h11" stroke="#e6e6e6" stroke-width="1"/>
<rect x="663.8" y="41.6" width="5" height="3.4" fill="#fafafa" stroke="#e4e4e4" stroke-width="0.8"/>
<rect x="664.2" y="45.4" width="4.2" height="3.4" fill="#e3e3e3"/>
<rect x="672.6" y="41" width="4.2" height="3.4" fill="#e3e3e3"/>
<rect x="672.2" y="44.6" width="5" height="3.8" fill="#fafafa" stroke="#e4e4e4" stroke-width="0.8"/>

<!-- 24 gear disabled -->
<g transform="translate(698.8 42.8)" fill="#eaedf4" stroke="#dde2ec" stroke-width="0.8" stroke-linejoin="round">
<path id="gear" d="M-1.9 -10.6 h3.8 l0.5 2.5 l2 0.8 l2.1 -1.4 l2.7 2.7 l-1.4 2.1 l0.8 2 l2.5 0.5 v3.8 l-2.5 0.5 l-0.8 2 l1.4 2.1 l-2.7 2.7 l-2.1 -1.4 l-2 0.8 l-0.5 2.5 h-3.8 l-0.5 -2.5 l-2 -0.8 l-2.1 1.4 l-2.7 -2.7 l1.4 -2.1 l-0.8 -2 l-2.5 -0.5 v-3.8 l2.5 -0.5 l0.8 -2 l-1.4 -2.1 l2.7 -2.7 l2.1 1.4 l2 -0.8 Z M0 -3.2 a3.2 3.2 0 1 0 0.01 0 Z" fill-rule="evenodd"/>
</g>

<!-- 25 disabled doc with arrow -->
<path d="M720.2 35.6 h11 l3.2 3.2 v13.4 h-14.2 Z" fill="#f1f1f1" stroke="#e9e9e9" stroke-width="0.9"/>
<path d="M716.8 43.8 L721.6 39.6 L721.6 42 L727 42 L727 45.6 L721.6 45.6 L721.6 48 Z" fill="#e8edcf"/>

<!-- 26 import -->
<path d="M747 37.3 h16.2 l2.6 9 v6.2 q0 1 -1 1 h-19.4 q-1 0 -1 -1 v-6.2 Z" fill="#f2f2f2" stroke="#5a5a5a" stroke-width="1" stroke-linejoin="round"/>
<rect x="745.8" y="46.7" width="18.6" height="5.6" fill="#fff" stroke="#5a5a5a" stroke-width="0.9"/>
<rect x="747.8" y="48.4" width="11" height="2.2" fill="#c3c3c3"/>
<rect x="759.3" y="47.2" width="1.1" height="4.6" fill="#111"/>
<path d="M746 36.4 C745.6 33.8 747.6 32.3 751 32.3 C755.4 32.3 757.6 35 757.8 40.6 L760.8 40.6 L755 47 L749.6 40.6 L752.6 40.6 C752.6 37.4 751.6 35.4 749.4 35.2 C747.8 35 746.6 35.4 746 36.4 Z" fill="#4a8cc8" stroke="#2d68a0" stroke-width="0.8" stroke-linejoin="round"/>

<!-- nav icons -->
<g fill="#e2e7f3">
<rect x="44.9" y="67.4" width="2.7" height="11.2"/>
<path d="M47.6 73 L56.8 67.3 L56.8 78.7 Z"/>
<path d="M70.6 72.8 L76.6 66.6 L78.8 68.8 L76.8 70.8 L82.8 70.8 L82.8 74.8 L76.8 74.8 L78.8 76.8 L76.6 79 Z"/>
<path d="M140.2 72.8 L134.2 66.6 L132 68.8 L134 70.8 L128 70.8 L128 74.8 L134 74.8 L132 76.8 L134.2 79 Z"/>
<path d="M163.1 73 L154.4 67.3 L154.4 78.7 Z"/>
<rect x="163.1" y="67.4" width="2.7" height="11.2"/>
</g>

<!-- info icon -->
<circle cx="787" cy="71.8" r="8" fill="url(#gi)"/>
<text x="787.2" y="76.6" text-anchor="middle" font-family="Liberation Serif" font-style="italic" font-weight="bold" font-size="14" fill="#fff">i</text>

<!-- mini toolbar icons -->
<rect x="13.6" y="313.8" width="12.6" height="13.4" rx="1" fill="#f8f8f8" stroke="#ededed" stroke-width="0.9"/>
<circle cx="24.6" cy="316.2" r="2.8" fill="#fbf8d0" opacity="0.75"/>
<rect x="33.5" y="314.5" width="15" height="13" fill="#fff" stroke="#3a3a3a" stroke-width="1"/>
<path d="M35.4 316.5 h7.6 M35.4 318.5 h7.6 M35.4 320.5 h6.6 M35.4 322.5 h5 M35.4 324.5 h7" stroke="#3a3a3a" stroke-width="1" shape-rendering="crispEdges"/>
<rect x="45" y="315" width="3" height="12" fill="#dcdcdc"/>
<rect x="45.6" y="320.4" width="1.9" height="4" fill="#8e8e8e"/>
<rect x="45.2" y="315.2" width="2.6" height="2.2" fill="#e0608c"/>
<path d="M45.5 325.2 l1 1 l1 -1 Z" fill="#333"/>
<path d="M46.4 316 L47.9 317.4 L41.4 324.4 L39.9 323 Z" fill="#f29a22" stroke="#b06a0a" stroke-width="0.5"/>
<path d="M39.9 323 L41.4 324.4 L39 325.4 Z" fill="#444"/>
<path d="M54.4 317.2 q0 -2.4 2.4 -2.4 h8 q2.4 0 2.4 2.4 v1 h-0.9 v9.2 q0 1 -1 1 h-9 q-1 0 -1 -1 v-9.2 h-0.9 Z" fill="#f2f2e7" stroke="#eaeade" stroke-width="0.8"/>
<path d="M56.5 316.6 h8.6" stroke="#e8e8da" stroke-width="1"/>
<path d="M59.2 323.6 l3.4 -1.8 v3.6 Z" fill="#e9e9db"/>
<g transform="translate(80.4 320.4) scale(0.58)" fill="#eef1f8" stroke="#e2e7f2" stroke-width="1.2" stroke-linejoin="round">
<path d="M-1.9 -10.6 h3.8 l0.5 2.5 l2 0.8 l2.1 -1.4 l2.7 2.7 l-1.4 2.1 l0.8 2 l2.5 0.5 v3.8 l-2.5 0.5 l-0.8 2 l1.4 2.1 l-2.7 2.7 l-2.1 -1.4 l-2 0.8 l-0.5 2.5 h-3.8 l-0.5 -2.5 l-2 -0.8 l-2.1 1.4 l-2.7 -2.7 l1.4 -2.1 l-0.8 -2 l-2.5 -0.5 v-3.8 l2.5 -0.5 l0.8 -2 l-1.4 -2.1 l2.7 -2.7 l2.1 1.4 l2 -0.8 Z M0 -3.2 a3.2 3.2 0 1 0 0.01 0 Z" fill-rule="evenodd"/>
</g>
</svg>

</div>
</body>
</html>
